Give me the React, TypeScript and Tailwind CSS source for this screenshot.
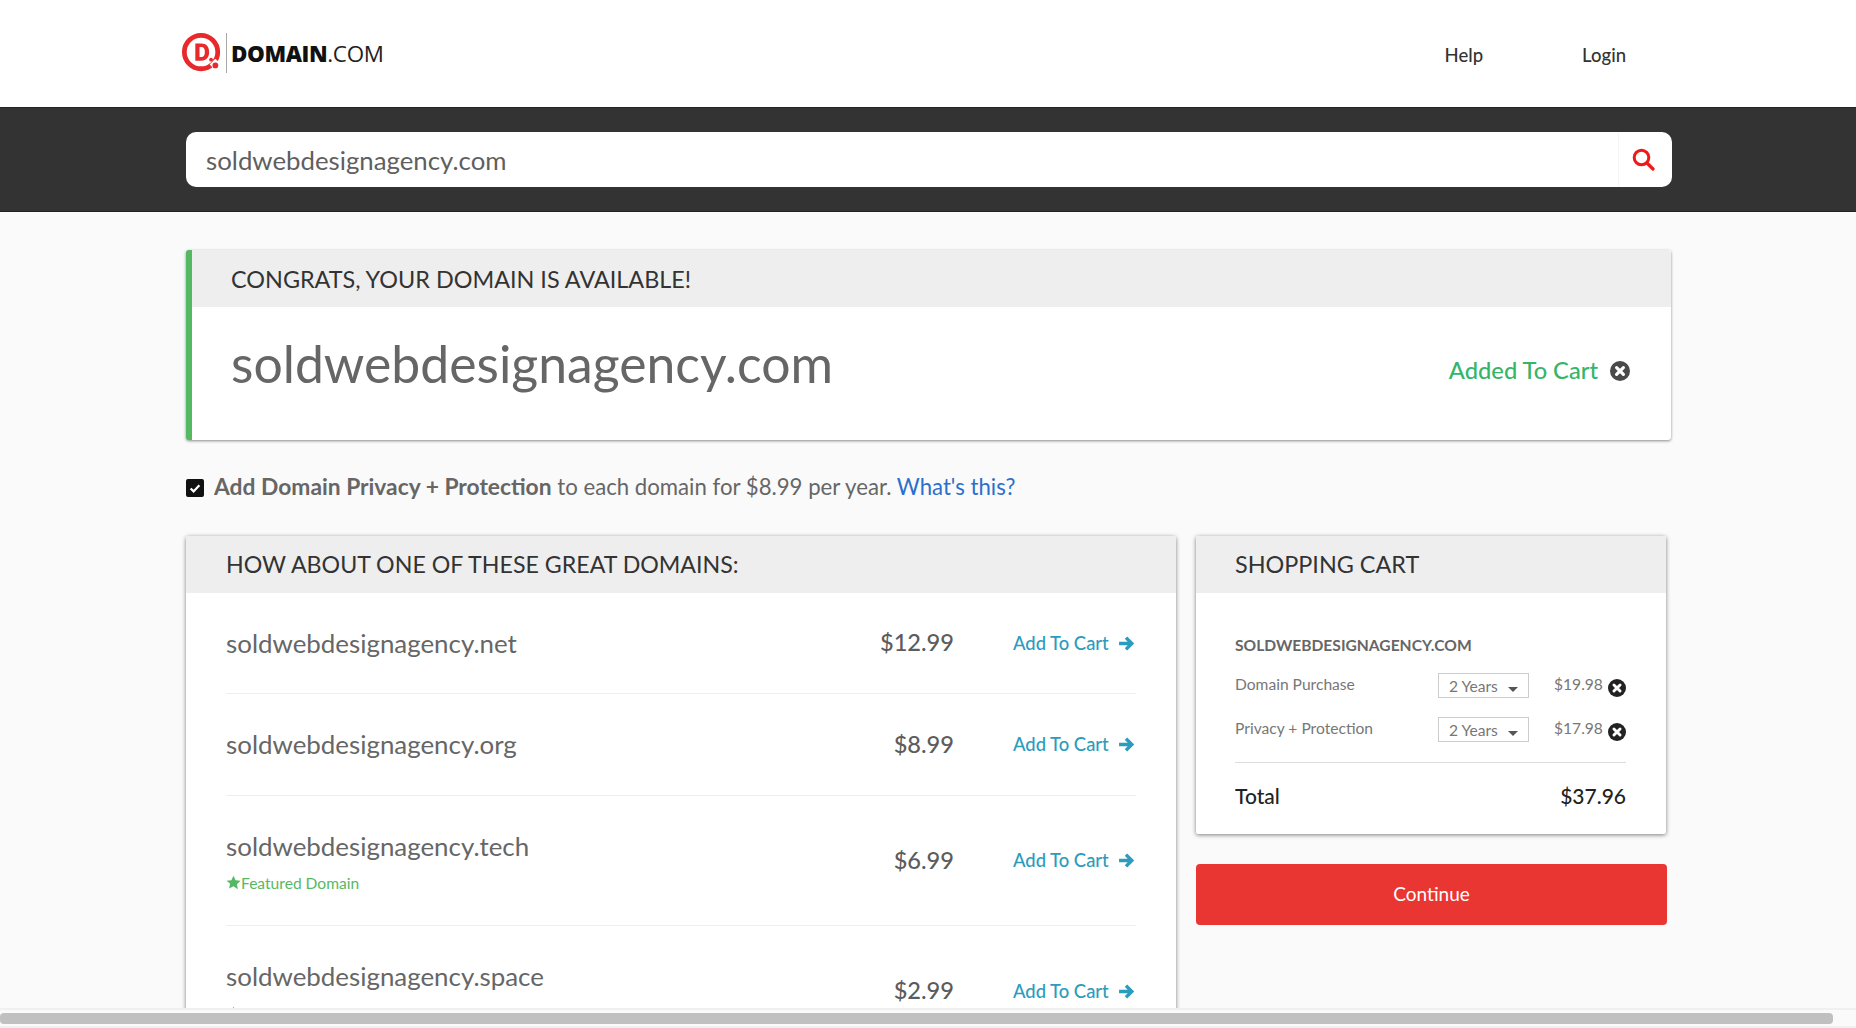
import React from "react";

const CircleX = ({ className }: { className: string }) => (
  <svg viewBox="0 0 20 20" className={className}>
    <circle cx="10" cy="10" r="10" fill="currentColor" />
    <path d="M6.6 6.6l6.8 6.8M13.4 6.6l-6.8 6.8" stroke="#fff" strokeWidth="3.2" strokeLinecap="round" />
  </svg>
);

const Arrow = () => (
  <svg viewBox="0 0 16 16" className="w-[17px] h-[17px] shrink-0 text-[#2b9cbd]">
    <path d="M1 8h11M7.5 2.5L13 8l-5.500 5.500" fill="none" stroke="currentColor" strokeWidth="3.200" strokeLinejoin="miter" />
  </svg>
);

const Star = () => (
  <svg viewBox="0 0 24 24" className="w-[15px] h-[15px] shrink-0 text-[#55b964]">
    <path fill="currentColor" d="M12 1l3.400 7.300 7.900 1-5.800 5.400 1.500 7.900L12 17.800 5 21.600l1.500-7.900L.7 9.300l7.900-1z" />
  </svg>
);

const Row = ({ tld, price, featured, h, last }: { tld: string; price: string; featured?: boolean; h: string; last?: boolean }) => (
  <div className={`flex items-center ${h} ${last ? "" : "border-b border-[#eeeeee]"}`}>
    <div className={`flex-1 min-w-0 ${featured ? "" : "-mt-[1px]"}`}>
      <div className={`text-[25.9px] leading-[32px] text-[#666666] ${featured ? "mt-[1px]" : ""}`}>soldwebdesignagency{tld}</div>
      {featured && (
        <div className="flex items-center text-[15.6px] leading-[20px] text-[#55b964] mt-[11px]">
          <Star />
          <span>Featured Domain</span>
        </div>
      )}
    </div>
    <div className="text-[23.6px] font-medium text-[#5c5c5c] text-right mr-[59px]">{price}</div>
    <div className="flex items-center w-[123px] gap-[9px] text-[18.4px] text-[#2b9cbd] font-medium whitespace-nowrap pt-[1px]">
      <span>Add To Cart</span>
      <Arrow />
    </div>
  </div>
);

const CartLine = ({ label, price }: { label: string; price: string }) => (
  <div className="flex items-center h-[44px] text-[15.6px] text-[#777777]">
    <div className="w-[203px] -mt-[3px]">{label}</div>
    <div className="relative w-[91px] h-[25px] border border-[#cccccc] pl-[10px] leading-[25px] -mt-[1px]">
      2 Years
      <span className="absolute right-[10px] top-[13px] w-0 h-0 border-x-[5px] border-x-transparent border-t-[5px] border-t-[#555555]" />
    </div>
    <div className="ml-[25px] w-[48px] -mt-[3px]">{price}</div>
    <CircleX className="ml-[6px] mt-[3px] w-[18px] h-[18px] text-[#222222]" />
  </div>
);

export default function App() {
  return (
    <div className="w-[1856px] h-[1028px] overflow-hidden flex flex-col bg-[#fafafa] font-['Lato','Liberation_Sans',sans-serif]">
      <div className="flex-1 min-h-0 overflow-hidden">
        <header className="h-[107px] bg-white flex items-center pl-[181px] pr-[230px]">
          <div className="flex items-center -mt-[1px]">
            <svg viewBox="0 0 44 44" className="w-[42px] h-[42px]">
              <circle cx="21" cy="21" r="17.500" fill="none" stroke="#e8282b" strokeWidth="5" />
              <path d="M15 12h6.500c5 0 8 3.400 8 9s-3 9-8 9H15z M19.400 15.800v10.400h2c2.400 0 3.600-1.800 3.600-5.200s-1.200-5.200-3.600-5.200z" fill="#e8282b" fillRule="evenodd" />
              <circle cx="31.500" cy="29" r="2" fill="#e8282b" />
              <path d="M30 34l6-6 6 6-6 6z" fill="#fff" />
              <circle cx="36" cy="35" r="3" fill="#e8282b" />
            </svg>
            <div className="w-px h-[40px] bg-[#a8a8a8] ml-[3px] mr-[4px]" />
            <div className="text-[22.400px] text-[#222222] font-['Open_Sans','Liberation_Sans',sans-serif] leading-none pt-[2px]">
              <span className="font-extrabold text-[#111111] tracking-[-0.4px]">DOMAIN</span>
              <span className="tracking-[-0.3px]">.COM</span>
            </div>
          </div>
          <div className="ml-auto flex items-center gap-[99px] text-[18.500px] text-[#333333] font-medium pt-[5px]">
            <span>Help</span>
            <span>Login</span>
          </div>
        </header>

        <div className="h-[105px] bg-[#333333] pl-[186px] pt-[24px] border-t border-[#222222] border-b">
          <div className="w-[1486px] h-[55px] bg-white rounded-[10px] flex items-center pl-[20px]">
            <div className="flex-1 text-[25.800px] text-[#5f5f5f] pt-[2px]">soldwebdesignagency.com</div>
            <div className="w-[54px] h-full flex items-center justify-center border-l border-[#f6f6f6] pr-[6px]">
              <svg viewBox="0 0 24 24" className="w-[24px] h-[24px] -mt-[2px]">
                <circle cx="10.500" cy="10.500" r="7.300" fill="none" stroke="#f01818" strokeWidth="3" />
                <path d="M16 16l6 6" stroke="#f01818" strokeWidth="3.200" strokeLinecap="round" />
              </svg>
            </div>
          </div>
        </div>

        <div className="pl-[186px] pt-[38px]">
          <section className="w-[1485px] h-[190px] bg-white rounded-[3px] border-l-[6px] border-[#55b964] shadow-[0_1px_3px_rgba(0,0,0,0.45)] overflow-hidden">
            <div className="h-[57px] bg-[#eeeeee] pl-[39px] pt-[2px] flex items-center text-[23.400px] text-[#333333]">CONGRATS, YOUR DOMAIN IS AVAILABLE!</div>
            <div className="h-[133px] flex pl-[39px] pr-[41px]">
              <div className="text-[51.700px] leading-[60px] pt-[26px] text-[#666666]">soldwebdesignagency.com</div>
              <div className="ml-auto flex items-center gap-[12px] pb-[6px] text-[23.700px] text-[#35b56a] font-medium">
                <span>Added To Cart</span>
                <CircleX className="w-[20px] h-[20px] text-[#4a4a4a]" />
              </div>
            </div>
          </section>

          <div className="flex items-center h-[96px] text-[22.200px] text-[#666666] pb-[2px]">
            <div className="w-[18px] h-[18px] bg-[#111111] rounded-[2px] flex items-center justify-center mr-[10px] mt-[2px]">
              <svg viewBox="0 0 16 16" className="w-[14px] h-[14px]">
                <path d="M3 8.500l3.400 3.400L13 4.800" fill="none" stroke="#fff" strokeWidth="2.600" />
              </svg>
            </div>
            <div className="-mt-[2px]">
              <span className="font-bold text-[22.800px]">Add Domain Privacy + Protection</span> to each domain for $8.99 per year.{" "}
              <span className="text-[#2a6fcb]">What's this?</span>
            </div>
          </div>

          <div className="flex items-start">
            <section className="w-[990px] bg-white rounded-[3px] shadow-[0_1px_4px_rgba(0,0,0,0.5)] mr-[20px]">
              <div className="h-[57px] bg-[#eeeeee] pl-[40px] flex items-center text-[23.200px] text-[#333333]">HOW ABOUT ONE OF THESE GREAT DOMAINS:</div>
              <div className="px-[40px]">
                <Row tld=".net" price="$12.99" h="h-[101px]" />
                <Row tld=".org" price="$8.99" h="h-[102px]" />
                <Row tld=".tech" price="$6.99" featured h="h-[130px]" />
                <Row tld=".space" price="$2.99" featured h="h-[130px]" last />
              </div>
            </section>

            <div className="w-[471px]">
              <section className="w-[470px] h-[298px] bg-white rounded-[2px] shadow-[0_1px_4px_rgba(0,0,0,0.5)]">
                <div className="h-[57px] bg-[#eeeeee] pl-[39px] flex items-center text-[23.400px] text-[#333333]">SHOPPING CART</div>
                <div className="pl-[39px] pr-[40px] pt-[42px]">
                  <div className="text-[15.600px] font-bold text-[#666666] leading-[20px] mb-[9px]">SOLDWEBDESIGNAGENCY.COM</div>
                  <CartLine label="Domain Purchase" price="$19.98" />
                  <CartLine label="Privacy + Protection" price="$17.98" />
                  <div className="mt-[10px] pt-[20px] border-t border-[#dddddd] flex justify-between text-[21px] font-medium text-[#222222] leading-[26px]">
                    <span>Total</span>
                    <span>$37.96</span>
                  </div>
                </div>
              </section>
              <button className="mt-[30px] w-[471px] h-[61px] bg-[#ea3632] rounded-[4px] text-white text-[19px]">Continue</button>
            </div>
          </div>
        </div>
      </div>

      <div className="h-[20px] shrink-0 bg-[#fafafa] border-t-2 border-b-2 border-[#f0f0f0] py-[3px]">
        <div className="w-[1833px] h-[11px] bg-[#c0c0c0] rounded-[4px]" />
      </div>
    </div>
  );
}
